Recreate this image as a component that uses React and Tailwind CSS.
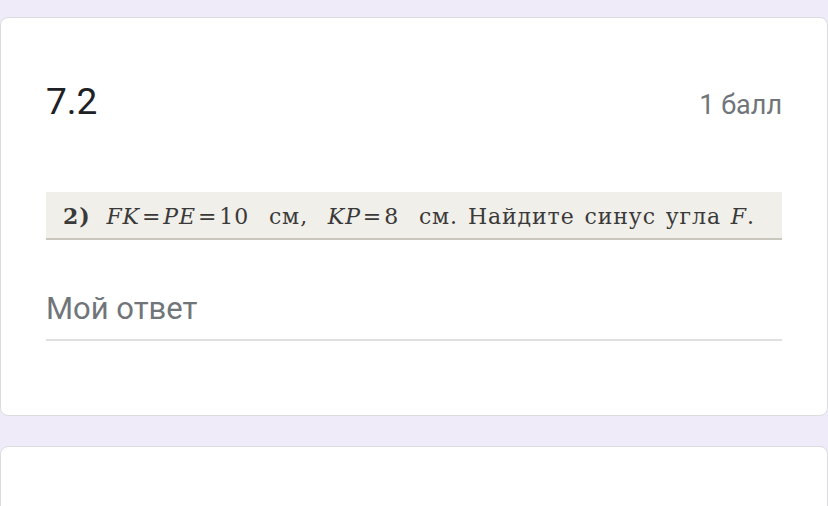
import React from "react";

const roboto = { fontFamily: "Roboto, 'Noto Sans', sans-serif" };

const Eq = () => <span className="mx-[2px]">=</span>;

const QuestionImage = () => (
  <div className="relative mt-[66px] h-[48px] bg-[#f1efe9] border-b-2 border-[#c9c6bd] flex items-center pl-[17px] pt-[2px] overflow-hidden">
    <span
      className="text-[22px] leading-none text-[#3a3a3a] whitespace-nowrap tracking-[0.9px] [word-spacing:2px]"
      style={{ fontFamily: "'DejaVu Serif', 'Liberation Serif', serif" }}
    >
      <b className="font-bold mr-[6px]">2)</b> <i>FK</i><Eq /><i>PE</i><Eq />10&nbsp; см,&nbsp; <i>KP</i><Eq />8&nbsp; см. Найдите синус угла <i>F</i>.
    </span>
  </div>
);

export default function App() {
  return (
    <div className="min-h-[506px] bg-[#f0ebf8] pt-[17px] overflow-hidden" style={roboto}>
      <div className="bg-white border border-[#dadce0] rounded-lg px-[45px] pt-[60px] pb-[74px]">
        <div className="flex items-baseline justify-between">
          <h2 className="text-[37px] leading-[48px] text-[#202124] font-normal">7.2</h2>
          <span className="text-[27px] text-[#70757a]">1 балл</span>
        </div>
        <QuestionImage />
        <div className="mt-[49px] border-b-2 border-[#e0e0e0] pb-[10px]">
          <span className="text-[31px] leading-[40px] text-[#70757a]">Мой ответ</span>
        </div>
      </div>
      <div className="mt-[30px] bg-white border border-[#dadce0] rounded-lg h-[80px]" />
    </div>
  );
}
